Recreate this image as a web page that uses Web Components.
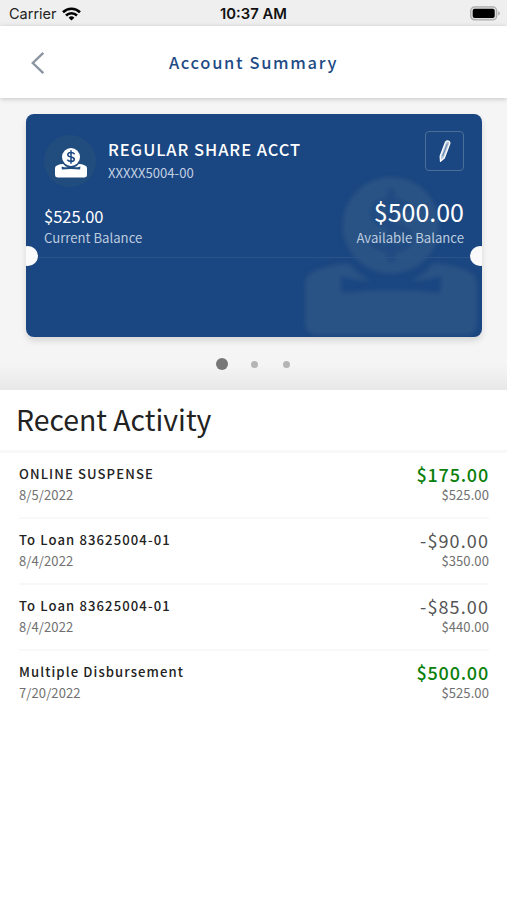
<!DOCTYPE html>
<html lang="en">
<head>
<meta charset="utf-8">
<meta name="viewport" content="width=device-width, initial-scale=1">
<title>Account Summary</title>
<style>
  body {
    margin: 0;
    min-height: 100vh;
    background: #fff;
    color: #222;
    font-family: "Noto Sans CJK SC", "Noto Sans", sans-serif;
  }
</style>
</head>
<body>
<my-status-bar carrier="Carrier" time="10:37 AM"></my-status-bar>
<my-page-header>Account Summary</my-page-header>
<my-account-carousel pages="3">
  <my-account-card>
    <span slot="name">REGULAR SHARE ACCT</span>
    <span slot="number">XXXXX5004-00</span>
    <span slot="current">$525.00</span>
    <span slot="available">$500.00</span>
  </my-account-card>
</my-account-carousel>
<my-activity-list>
  <span slot="title">Recent Activity</span>
  <my-activity-item name="ONLINE SUSPENSE" date="8/5/2022" amount="$175.00" balance="$525.00" credit></my-activity-item>
  <my-activity-item name="To Loan 83625004-01" date="8/4/2022" amount="-$90.00" balance="$350.00"></my-activity-item>
  <my-activity-item name="To Loan 83625004-01" date="8/4/2022" amount="-$85.00" balance="$440.00"></my-activity-item>
  <my-activity-item name="Multiple Disbursement" date="7/20/2022" amount="$500.00" balance="$525.00" credit></my-activity-item>
</my-activity-list>

<script>
/**
 * Creates a template element from a string of markup.
 *
 * @param {string} html - The markup.
 * @returns {HTMLTemplateElement} The template.
 */
const createTemplate = (html) => {
  const template = document.createElement('template')
  template.innerHTML = html
  return template
}

/**
 * Attaches a shadow root holding a copy of the template.
 */
class BaseElement extends HTMLElement {
  constructor () {
    super()
    this.attachShadow({ mode: 'open' }).append(
      this.constructor.template.content.cloneNode(true)
    )
  }

  /**
   * Copies attribute values into the elements with the same id.
   *
   * @param {...string} names - The attribute names.
   */
  fill (...names) {
    for (const name of names) {
      this.shadowRoot.getElementById(name).textContent = this.getAttribute(name)
    }
  }
}

/*
 * Status bar of the phone.
 */
customElements.define('my-status-bar', class extends BaseElement {
  static template = createTemplate(`
    <style>
      :host {
        display: grid;
        grid-template-columns: 1fr auto 1fr;
        align-items: center;
        height: 26px;
        padding: 1px 7px 0 9px;
        box-sizing: border-box;
        background: #efefef;
        color: #222;
        font: 14.5px/20px Inter, sans-serif;
      }
      .left {
        display: flex;
        align-items: center;
        gap: 5px;
      }
      #time {
        margin-left: -2px;
        font-size: 14.8px;
        font-weight: 600;
        color: #111;
      }
      .battery {
        justify-self: end;
      }
      svg {
        display: block;
      }
    </style>
    <div class="left">
      <span id="carrier"></span>
      <svg width="19" height="14" viewBox="0 0 19 14" fill="none" stroke="#000" stroke-width="2.6">
        <path d="M1 5.2a12.2 12.2 0 0 1 17 0"/>
        <path d="M4 8.5a7.9 7.9 0 0 1 11 0"/>
        <path d="M9.5 13.6L6.6 10.7a4.1 4.1 0 0 1 5.8 0z" fill="#000" stroke="none"/>
      </svg>
    </div>
    <span id="time"></span>
    <svg class="battery" width="30" height="15" viewBox="0 0 30 15">
      <rect x=".7" y=".9" width="26" height="13" rx="4" fill="#ddd" stroke="#aaa" stroke-width="1.2"/>
      <rect x="2.7" y="2.8" width="22" height="9.2" rx="2" fill="#000"/>
      <path d="M28.2 5.2v4.4q1.6-.6 1.6-2.2t-1.6-2.2z" fill="#aaa"/>
    </svg>
  `)

  connectedCallback () {
    this.fill('carrier', 'time')
  }
})

/*
 * Header with a back button and a title.
 */
customElements.define('my-page-header', class extends BaseElement {
  static template = createTemplate(`
    <style>
      :host {
        display: grid;
        grid-template-columns: 1fr auto 1fr;
        align-items: center;
        height: 72px;
        padding: 2px 30px 0;
        box-sizing: border-box;
        position: relative;
        background: #fff;
        box-shadow: 0 1px 5px rgba(0, 0, 0, .2);
      }
      h1 {
        margin: 0 0 2px;
        color: #1f4c86;
        font-size: 16.5px;
        font-weight: 500;
        line-height: 24px;
        letter-spacing: 1.65px;
      }
      button {
        justify-self: start;
        padding: 0;
        border: 0;
        background: none;
      }
      svg {
        display: block;
      }
    </style>
    <button aria-label="Back">
      <svg width="16" height="24" viewBox="0 0 16 24" fill="none" stroke="#8b96a3" stroke-width="2.4">
        <path d="M13.3 1.8L2.8 12l10.5 10.2"/>
      </svg>
    </button>
    <h1><slot></slot></h1>
  `)
})

/*
 * Coin dropping into a tray. Uses the current colour, the cut-outs use --cut.
 */
customElements.define('my-coin-icon', class extends BaseElement {
  static template = createTemplate(`
    <style>
      :host {
        display: block;
      }
      svg {
        display: block;
        width: 100%;
      }
      .sign {
        fill: none;
        stroke: var(--cut);
        stroke-width: 1.5;
      }
    </style>
    <svg viewBox="0 0 32 30" fill="currentColor" aria-hidden="true">
      <circle cx="16" cy="9" r="9"/>
      <path class="sign" d="M16 2.2v13.6M19.6 6.2Q18.4 4.6 16 4.6Q12.8 4.6 12.8 6.8Q12.8 8.5 16 9Q19.3 9.6 19.3 11.3Q19.3 13.4 16 13.4Q13.6 13.4 12.3 11.7"/>
      <path d="M0 20Q0 18 2 17.4Q5 16.1 8.2 16.1Q10.2 18.6 12.5 19.3Q9 19.3 6.6 18.4L6.9 21.6Q16 20.4 25.1 21.6L25.4 18.4Q23 19.3 19.5 19.3Q21.8 18.6 23.8 16.1Q27 16.1 30 17.4Q32 18 32 20V27Q32 29.4 29.6 29.4H2.4Q0 29.4 0 27z"/>
    </svg>
  `)
})

/*
 * Ticket-like card for one account.
 */
customElements.define('my-account-card', class extends BaseElement {
  static template = createTemplate(`
    <style>
      :host {
        display: block;
        position: relative;
        height: 223px;
        border-radius: 8px;
        background: #1a4681;
        color: #fff;
        box-shadow: 0 4px 6px rgba(0, 0, 0, .12);
        overflow: hidden;
      }
      .watermark {
        position: absolute;
        right: 5px;
        top: 63px;
        width: 172px;
        color: #2a5385;
        filter: blur(2px);
        --cut: #204b82;
      }
      .top {
        position: relative;
        display: flex;
        flex-direction: column;
        height: 144px;
        padding: 17px 18px 0;
        box-sizing: border-box;
        border-bottom: 1px solid #2b5588;
      }
      .account {
        display: flex;
        align-items: flex-start;
      }
      .badge {
        display: flex;
        justify-content: center;
        width: 52px;
        height: 52px;
        margin: 4px 12px 0 0;
        padding: 13px 0 0 2px;
        box-sizing: border-box;
        border-radius: 50%;
        background: #214d7e;
        --cut: #1a4681;
      }
      .badge my-coin-icon {
        width: 32px;
      }
      .text {
        flex: 1;
        padding-top: 6px;
      }
      .name {
        font-size: 16.5px;
        line-height: 24px;
        letter-spacing: .95px;
        font-weight: 500;
      }
      .number {
        font-size: 13.1px;
        line-height: 24px;
        color: #c3d0e2;
      }
      .edit {
        display: flex;
        align-items: center;
        justify-content: center;
        width: 39px;
        height: 40px;
        padding: 0;
        border: 1px solid #4a7099;
        border-radius: 4px;
        background: none;
      }
      .balances {
        display: flex;
        justify-content: space-between;
        align-items: flex-end;
        margin-top: 10px;
      }
      .balances > :last-child {
        text-align: right;
      }
      .amount {
        font-size: 16.5px;
        line-height: 22px;
      }
      .amount.large {
        font-size: 25px;
        line-height: 32px;
        margin-top: -2px;
      }
      .label {
        font-size: 13.15px;
        line-height: 21px;
        color: #bccbdf;
      }
      .notch {
        position: absolute;
        top: 132px;
        width: 20px;
        height: 20px;
        border-radius: 50%;
        background: #fafafa;
      }
      .notch.start {
        left: -8px;
      }
      .notch.end {
        right: -8px;
      }
    </style>
    <my-coin-icon class="watermark"></my-coin-icon>
    <div class="top">
      <div class="account">
        <div class="badge"><my-coin-icon></my-coin-icon></div>
        <div class="text">
          <div class="name"><slot name="name"></slot></div>
          <div class="number"><slot name="number"></slot></div>
        </div>
        <button class="edit" aria-label="Edit">
          <svg width="14" height="24" viewBox="0 0 14 24" fill="#b7c7dc" stroke="#fff" stroke-width="1.3" stroke-linejoin="round">
            <path d="M2.2 17.2L7.4 3.4Q8.2 1.4 10.3 2Q12.3 2.8 11.7 4.8L6.3 19L2.5 22.3z"/>
            <path d="M4.6 17L9.4 4.6" stroke="#5c80a8" stroke-width="1"/>
          </svg>
        </button>
      </div>
      <div class="balances">
        <div>
          <div class="amount"><slot name="current"></slot></div>
          <div class="label">Current Balance</div>
        </div>
        <div>
          <div class="amount large"><slot name="available"></slot></div>
          <div class="label">Available Balance</div>
        </div>
      </div>
    </div>
    <div class="notch start"></div>
    <div class="notch end"></div>
  `)
})

/*
 * Carousel of account cards with page dots.
 */
customElements.define('my-account-carousel', class extends BaseElement {
  static template = createTemplate(`
    <style>
      :host {
        display: flex;
        flex-direction: column;
        height: 292px;
        padding: 16px 25px 0 26px;
        box-sizing: border-box;
        background: linear-gradient(#f5f5f5 265px, #e8e8e8);
      }
      .dots {
        display: flex;
        justify-content: center;
        margin-top: 11px;
      }
      .dots span {
        display: flex;
        align-items: center;
        justify-content: center;
        width: 32px;
        height: 32px;
      }
      .dots span::before {
        content: "";
        width: 7px;
        height: 7px;
        border-radius: 50%;
        background: #b5b5b5;
      }
      .dots span:first-child::before {
        width: 12.5px;
        height: 12.5px;
        background: #777;
      }
    </style>
    <slot></slot>
    <div class="dots"></div>
  `)

  connectedCallback () {
    const dots = this.shadowRoot.querySelector('.dots')
    for (let i = 0; i < Number(this.getAttribute('pages')); i++) {
      dots.append(document.createElement('span'))
    }
  }
})

/*
 * List of recent transactions.
 */
customElements.define('my-activity-list', class extends BaseElement {
  static template = createTemplate(`
    <style>
      :host {
        display: block;
      }
      h2 {
        margin: 0;
        height: 63px;
        padding-left: 16px;
        box-sizing: border-box;
        border-bottom: 3px solid #f8f8f8;
        font-size: 28.4px;
        font-weight: 400;
        line-height: 57px;
      }
      .items {
        padding: 0 18px 0 19px;
      }
    </style>
    <h2><slot name="title"></slot></h2>
    <div class="items"><slot></slot></div>
  `)
})

/*
 * One transaction.
 */
customElements.define('my-activity-item', class extends BaseElement {
  static template = createTemplate(`
    <style>
      :host {
        display: flex;
        justify-content: space-between;
        height: 66px;
        padding-top: 10px;
        box-sizing: border-box;
        border-bottom: 2px solid #f8f8f8;
      }
      :host(:last-of-type) {
        border-bottom: 0;
      }
      #name {
        font-size: 13.1px;
        font-weight: 500;
        line-height: 22px;
        letter-spacing: 1.1px;
      }
      #date, #balance {
        font-size: 13px;
        line-height: 20px;
        letter-spacing: .1px;
        color: #707070;
      }
      .end {
        text-align: right;
      }
      #amount {
        font-size: 18px;
        line-height: 22px;
        letter-spacing: 1.1px;
        color: #555;
      }
      :host([credit]) #amount {
        letter-spacing: .8px;
        color: #0b800b;
        font-weight: 500;
      }
    </style>
    <div>
      <div id="name"></div>
      <div id="date"></div>
    </div>
    <div class="end">
      <div id="amount"></div>
      <div id="balance"></div>
    </div>
  `)

  connectedCallback () {
    this.fill('name', 'date', 'amount', 'balance')
  }
})
</script>
</body>
</html>
